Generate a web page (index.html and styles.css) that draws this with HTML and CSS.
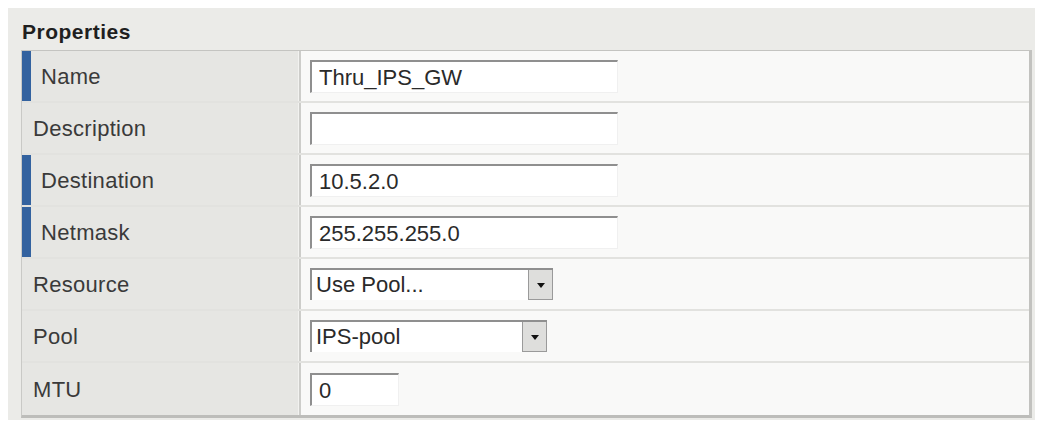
FILE: index.html
```html
<!DOCTYPE html>
<html lang="en">
<head>
  <meta charset="UTF-8">
  <title>Route Properties</title>
  <link rel="stylesheet" href="styles.css">
</head>
<body>
  <div class="panel">
    <h2 class="panel-title">Properties</h2>
    <div class="props">
      <div class="row">
        <div class="label required">Name</div>
        <div class="value"><input class="field" type="text" value="Thru_IPS_GW"></div>
      </div>
      <div class="row">
        <div class="label">Description</div>
        <div class="value"><input class="field" type="text" value=""></div>
      </div>
      <div class="row">
        <div class="label required">Destination</div>
        <div class="value"><input class="field" type="text" value="10.5.2.0"></div>
      </div>
      <div class="row">
        <div class="label required">Netmask</div>
        <div class="value"><input class="field" type="text" value="255.255.255.0"></div>
      </div>
      <div class="row">
        <div class="label">Resource</div>
        <div class="value">
          <div class="dropdown wide">
            <span class="dropdown-text">Use Pool...</span>
            <span class="dropdown-btn"><span class="arrow"></span></span>
          </div>
        </div>
      </div>
      <div class="row">
        <div class="label">Pool</div>
        <div class="value">
          <div class="dropdown">
            <span class="dropdown-text">IPS-pool</span>
            <span class="dropdown-btn"><span class="arrow"></span></span>
          </div>
        </div>
      </div>
      <div class="row">
        <div class="label">MTU</div>
        <div class="value"><input class="field small" type="text" value="0"></div>
      </div>
    </div>
  </div>
</body>
</html>
```

FILE: styles.css
```css
body {
  margin: 0;
  background: #fff;
  font-family: "Liberation Sans", Arial, sans-serif;
  color: #333;
}
.panel {
  margin: 8px 9px 0 8px;
  height: 412px;
  background: #ebebe8;
  padding: 0 3px 0 13px;
  box-sizing: border-box;
}
.panel-title {
  margin: 0;
  height: 42px;
  padding: 12px 0 0 1px;
  box-sizing: border-box;
  font-size: 21px;
  letter-spacing: 0.5px;
  font-weight: bold;
  color: #1f1f1f;
}
.props {
  border-top: 1px solid #c4c4c1;
  border-right: 3px solid #c2c2bf;
  border-bottom: 3px solid #bdbdba;
  border-left: 1px solid #c9c9c6;
  background: #f9f9f8;
}
.row {
  display: flex;
  height: 52px;
  box-sizing: border-box;
  border-bottom: 2px solid #e2e2df;
}
.row:last-child {
  border-bottom: none;
}
.label {
  flex: 0 0 279px;
  box-sizing: border-box;
  display: flex;
  align-items: center;
  padding: 2px 0 0 11px;
  background: #e6e6e3;
  border-right: 2px solid #cdcdca;
  box-shadow: inset -1px 0 0 #f2f2f0;
  font-size: 22px;
  letter-spacing: 0.3px;
  color: #3a3a3a;
}
.label.required {
  padding-left: 19px;
  box-shadow: inset 9px 0 0 #33629f, inset -1px 0 0 #f2f2f0;
}
.value {
  flex: 1;
  display: flex;
  align-items: center;
  padding-left: 9px;
}
.field {
  display: block;
  width: 308px;
  height: 33px;
  box-sizing: border-box;
  padding: 2px 7px 0;
  border: none;
  border-top: 2px solid #8f8f8f;
  border-left: 2px solid #8f8f8f;
  border-right: 1px solid #f0f0f0;
  border-bottom: 1px solid #f0f0f0;
  background: #fff;
  font-family: "Liberation Sans", Arial, sans-serif;
  font-size: 22px;
  color: #2a2a2a;
  outline: none;
}
.field.small {
  width: 89px;
}
.dropdown {
  display: flex;
  align-items: stretch;
  width: 237px;
  height: 32px;
  box-sizing: border-box;
  border-top: 2px solid #8f8f8f;
  border-left: 2px solid #8f8f8f;
  background: #fff;
}
.dropdown.wide {
  width: 243px;
}
.dropdown-text {
  flex: 1;
  padding: 2px 0 0 4px;
  font-size: 22px;
  color: #2a2a2a;
}
.dropdown-btn {
  width: 25px;
  display: flex;
  align-items: center;
  justify-content: center;
  background: #dededc;
  border: 1px solid #9a9a9a;
  border-top: none;
  box-sizing: border-box;
}
.arrow {
  width: 0;
  height: 0;
  border-left: 4px solid transparent;
  border-right: 4px solid transparent;
  border-top: 5px solid #111;
  position: relative;
  top: 1px;
}
```
